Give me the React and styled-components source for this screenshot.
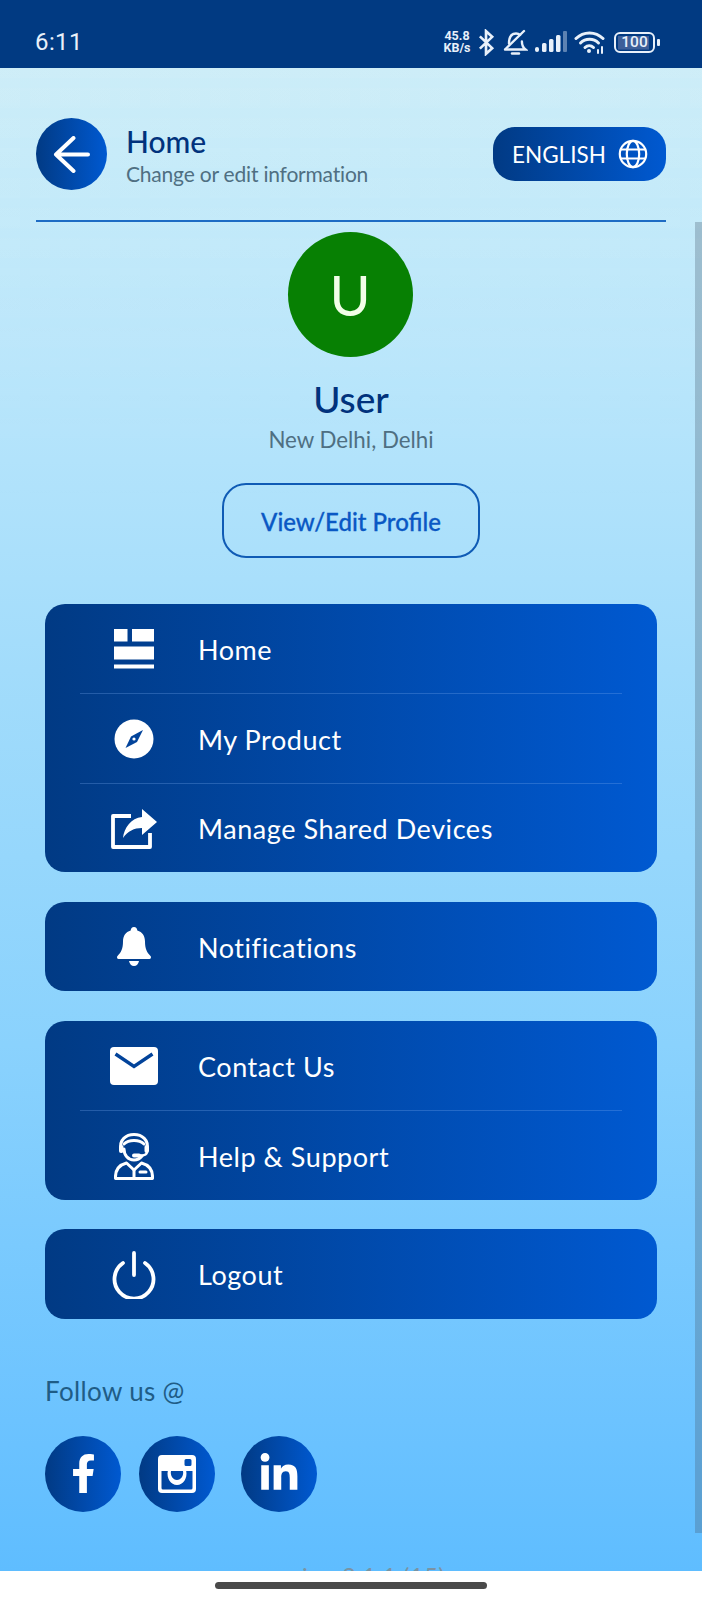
import React from "react";
import styled, { createGlobalStyle } from "styled-components";
import { FaFacebookF, FaLinkedinIn } from "react-icons/fa";

const Global = createGlobalStyle`
  html, body { margin: 0; padding: 0; background: #fff; }
  body { width: 702px; height: 1600px; overflow: hidden; font-family: Lato, "Noto Sans", sans-serif; }
  * { box-sizing: border-box; }
`;

const blue = "linear-gradient(90deg, #013a84 0%, #0059d1 100%)";

const Phone = styled.div`
  width: 702px; height: 1600px; display: flex; flex-direction: column; position: relative; overflow: hidden;
`;
const StatusBar = styled.div`
  height: 68px; flex: none; background: #013a82; display: flex; align-items: center; justify-content: space-between;
  padding: 16px 43px 0 35px; color: #e8f0fa;
`;
const Clock = styled.span`
  font: 400 24px Roboto, sans-serif; letter-spacing: .4px;
`;
const StatusIcons = styled.div`
  display: flex; align-items: center; height: 28px;
`;
const Speed = styled.span`
  font: 700 12.5px/12px Roboto, sans-serif; text-align: center; width: 28px; margin-right: 7px;
`;
const Screen = styled.main`
  flex: none; height: 1503px; position: relative; overflow: hidden;
  background: linear-gradient(180deg, #cbedf8 0%, #b9e6fb 20%, #a2dcfb 40%, #8ad2fd 65%, #6cc3ff 90%, #5fbdff 100%);
  &::before {
    content: ""; position: absolute; left: 0; right: 0; top: 0; height: 460px;
    background:
      repeating-linear-gradient(90deg, rgba(255,255,255,.04) 0 20px, transparent 20px 30px),
      repeating-linear-gradient(0deg, rgba(255,255,255,.04) 0 20px, transparent 20px 30px);
    -webkit-mask-image: linear-gradient(180deg, #000, transparent);
    mask-image: linear-gradient(180deg, #000, transparent);
  }
`;
const Content = styled.div`
  position: relative; display: flex; flex-direction: column; padding-top: 50px;
`;
const Header = styled.header`
  height: 72px; margin: 0 36px; display: flex; align-items: center;
`;
const BackButton = styled.div`
  width: 71px; height: 72px; border-radius: 50%; background: ${blue}; display: flex; align-items: center; justify-content: center; flex: none;
`;
const Titles = styled.div`
  margin-left: 19px; flex: 1; display: flex; flex-direction: column; padding-top: 7px;
`;
const Title = styled.div`
  font-size: 30px; line-height: 36px; color: #01327c; font-weight: 500; letter-spacing: 0; margin-top: -3px;
`;
const Subtitle = styled.div`
  font-size: 21px; line-height: 30px; color: #4f6f82; letter-spacing: -.2px;
`;
const LangPill = styled.div`
  width: 173px; height: 54px; border-radius: 22px; background: ${blue}; color: #fff; display: flex; align-items: center;
  padding-left: 19px; gap: 12px; font-size: 22.5px;
`;
const Rule = styled.hr`
  margin: 30px 36px 0; height: 2px; border: 0; background: #1e6cc4;
`;
const Avatar = styled.div`
  width: 125px; height: 125px; border-radius: 50%; background: #078003; color: #f2ffe8; margin: 10px auto 0;
  display: flex; align-items: center; justify-content: center; font: 400 56px Lato, sans-serif; transform: translateX(-1px);
`;
const UserName = styled.div`
  text-align: center; font-size: 37px; line-height: 42px; color: #01327c; font-weight: 500; margin-top: 21px;
`;
const Location = styled.div`
  text-align: center; font-size: 22.3px; line-height: 28px; color: #4f6f82; margin-top: 6px;
`;
const ProfileButton = styled.div`
  width: 258px; height: 75px; margin: 29px auto 0; border: 2px solid #0f5bb5; border-radius: 24px; color: #0a58c4;
  display: flex; align-items: center; justify-content: center; font-size: 24px; font-weight: 500; padding-top: 2px;
  -webkit-text-stroke: .3px #0a58c4;
`;
const Menu = styled.nav`
  margin: 45.5px 45px 0; display: flex; flex-direction: column; gap: 29.5px;
`;
const Card = styled.section`
  border-radius: 20px; background: ${blue}; padding: 0 35px; display: flex; flex-direction: column;
`;
const Row = styled.div`
  height: 89.5px; padding-top: 2px; display: flex; align-items: center; color: #fff; font-size: 27px; letter-spacing: .55px;
  & + & { border-top: 1px solid rgba(120,170,240,.3); }
`;
const IconSlot = styled.span`
  width: 118px; flex: none; display: flex; justify-content: center;
  & > svg { display: block; transform: translateX(-5px); }
`;
const Follow = styled.div`
  margin: 56px 0 0 45px; font-size: 26px; line-height: 32px; color: #1f5c86; letter-spacing: .35px;
`;
const Socials = styled.div`
  display: flex; margin: 29px 0 0 45px;
`;
const Social = styled.div`
  width: 76px; height: 76px; border-radius: 50%; background: ${blue}; color: #fff; display: flex; align-items: center; justify-content: center;
  margin-right: ${p => p.$gap}px;
`;
const Version = styled.div`
  position: absolute; left: 0; right: 0; top: 1494px; text-align: center; font-size: 24px; line-height: 28px; color: #7a93a3; letter-spacing: .3px;
`;
const Scrollbar = styled.div`
  position: absolute; right: 0; top: 154px; width: 7px; height: 1311px; background: rgba(70,90,110,.3);
`;
const NavBar = styled.div`
  flex: 1; background: #fff; display: flex; justify-content: center; padding-top: 11px;
`;
const HomeIndicator = styled.div`
  width: 272px; height: 7px; border-radius: 4px; background: #4a4a4a;
`;

const Bluetooth = () => (
  <svg width="17" height="27" viewBox="0 0 18 28" fill="none" stroke="currentColor" strokeWidth="2.8" style={{ marginRight: 8 }}>
    <path d="M2 7.500 15 20 8.500 26V2L15 8 2 20.500" strokeLinejoin="miter" />
  </svg>
);
const BellOff = () => (
  <svg width="25" height="27" viewBox="0 0 25 26" fill="none" stroke="currentColor" strokeWidth="2.4" strokeLinecap="round" style={{ marginRight: 7 }}>
    <path d="M2 20h20.500c-2.500-2-3.600-4-3.600-8 M6 14c0-6 2-10 7-10 1.500 0 3 .4 4 1.400" />
    <path d="M3 19 21 1.500" />
    <path d="M9 24h7" />
  </svg>
);
const Signal = () => (
  <svg width="32" height="22" viewBox="0 0 32 22" fill="currentColor" style={{ marginRight: 7 }}>
    <rect x="0" y="16" width="4" height="5" rx="2" />
    <rect x="7" y="12" width="4.500" height="9" rx="1.500" />
    <rect x="14" y="8" width="4.500" height="13" rx="1.500" />
    <rect x="21" y="4" width="4.500" height="17" rx="1.500" />
    <rect x="28" y="0" width="4" height="21" rx="1" opacity=".4" />
  </svg>
);
const Wifi = () => (
  <svg width="32" height="24" viewBox="0 0 32 24" fill="none" stroke="currentColor" strokeWidth="3" strokeLinecap="round" style={{ marginRight: 8 }}>
    <path d="M2 8.500C9.500 1 21.500 1 29 8.500" />
    <path d="M6.500 13c5-5 13-5 18 0" />
    <path d="M11 17.500c2.500-2.400 6-2.400 8.500 0" />
    <circle cx="15" cy="21" r="2" fill="currentColor" stroke="none" />
    <path d="M24 23v-3M28 23v-6" strokeWidth="2" />
  </svg>
);
const Battery = styled.span`
  position: relative; width: 41px; height: 21px; border: 2px solid #e8f0fa; border-radius: 6px; display: flex; align-items: center; justify-content: center;
  font: 500 15.500px Roboto, sans-serif; background: linear-gradient(#3d5f99,#3d5f99) 2px 2px / 84% 80% no-repeat; margin-right: 4px;
  &::after { content: ""; position: absolute; right: -7px; top: 5px; width: 3px; height: 7px; background: #e8f0fa; border-radius: 1px; }
`;

const ArrowBack = () => (
  <svg width="37" height="37" viewBox="0 0 37 37" fill="none" stroke="#fff" strokeWidth="4" strokeLinecap="round" strokeLinejoin="round">
    <path d="M35 18.500H3M20.500 2 3 18.500 20.500 35" />
  </svg>
);
const Globe = () => (
  <svg width="30" height="30" viewBox="0 0 30 30" fill="none" stroke="#fff" strokeWidth="2.200">
    <circle cx="15" cy="15" r="13.200" />
    <ellipse cx="15" cy="15" rx="6.200" ry="13.200" />
    <path d="M2.500 10.500h25M2.500 19.500h25" />
  </svg>
);
const HomeIcon = () => (
  <svg width="40" height="40" viewBox="0 0 40 40" fill="#fff">
    <rect x="0" y="0" width="13.500" height="12.500" />
    <rect x="18" y="0" width="22" height="12.500" />
    <rect x="0" y="17.500" width="40" height="13" />
    <rect x="0" y="35.500" width="40" height="4" />
  </svg>
);
const Compass = () => (
  <svg width="40" height="40" viewBox="0 0 40 40">
    <circle cx="20" cy="20" r="19.500" fill="#fff" />
    <path d="M29 11 23 23 11.500 29 17 17.500Z" fill="#02439a" />
    <circle cx="20" cy="20" r="1.600" fill="#fff" />
  </svg>
);
const ShareIcon = () => (
  <svg width="46" height="40" viewBox="0 0 46 40" fill="none">
    <path d="M20 7H2v31h37V24" stroke="#fff" strokeWidth="3.800" strokeLinejoin="round" />
    <path d="M31 0 46 13 31 26v-7c-8 0-14 3-19 10 1-10 8-20 19-21Z" fill="#fff" />
  </svg>
);
const Bell = () => (
  <svg width="34" height="40" viewBox="0 0 34 40" fill="#fff">
    <path d="M17 0c2 0 3.300 1.500 3.300 3.600 5.200 1.500 7.700 5.600 7.700 11 0 7 1.800 11 5.500 14.400.9.900.5 3-1 3H1.500C0 32-.4 30 .5 29 4.200 25.600 6 21.600 6 14.600c0-5.400 2.500-9.500 7.700-11C13.700 1.500 15 0 17 0Z" />
    <path d="M12 34h10c-.6 3-2.500 5-5 5s-4.400-2-5-5Z" />
  </svg>
);
const Mail = () => (
  <svg width="48" height="38" viewBox="0 0 48 38">
    <rect width="48" height="38" rx="4" fill="#fff" />
    <path d="M5.500 7 24 19.500 42.500 7" fill="none" stroke="#02439a" strokeWidth="3.400" />
  </svg>
);
const Agent = () => (
  <svg width="40" height="47" viewBox="0 0 40 47" fill="none" stroke="#fff" strokeWidth="3" strokeLinejoin="round" strokeLinecap="round">
    <path d="M7 16c-2-9 5-14.500 13-14.500S35 7 33 16" />
    <path d="M10 11c3-3 7-3.500 10-3.500s7 .5 10 3.500" />
    <path d="M10 16c0 6 4 11 10 11 3 0 6-1.500 8-4" />
    <rect x="5" y="12" width="4.500" height="8" rx="2" fill="#fff" stroke="none" />
    <rect x="30.500" y="12" width="4.500" height="8" rx="2" fill="#fff" stroke="none" />
    <path d="M33 19c0 2.500-3 3.500-7 3.500" strokeWidth="2.400" />
    <rect x="18" y="20.500" width="9" height="4" rx="2" fill="#fff" stroke="none" />
    <path d="M1.500 45.500c-.5-9 3.500-13.500 11-15.500L20 37l7.500-7c7.500 2 11.500 6.500 11 15.500Z" />
    <path d="M20 37v8.500M26 39h6" />
  </svg>
);
const Power = () => (
  <svg width="44" height="48" viewBox="0 0 44 48" fill="none" stroke="#fff" strokeWidth="3.800" strokeLinecap="round">
    <path d="M22 2v22" />
    <path d="M11 12a19.500 19.500 0 1 0 22 0" />
  </svg>
);
const Instagram = () => (
  <svg width="38" height="38" viewBox="0 0 38 38">
    <path fillRule="evenodd" fill="#fff" d="M4 0h30a4 4 0 0 1 4 4v30a4 4 0 0 1-4 4H4a4 4 0 0 1-4-4V4a4 4 0 0 1 4-4Z M3.500 16v17a1.500 1.500 0 0 0 1.500 1.500h28a1.500 1.500 0 0 0 1.500-1.500V16h-6.300c1.500 7-3 14-9.200 14S8.300 23 9.800 16Z M13 16c-1 4.500 2 9 6 9s7-4.500 6-9Z M28 4a1.500 1.500 0 0 0-1.500 1.500v4A1.500 1.500 0 0 0 28 11h4a1.500 1.500 0 0 0 1.500-1.500v-4A1.500 1.500 0 0 0 32 4Z" />
  </svg>
);

const groups = [
  [["Home", <HomeIcon />], ["My Product", <Compass />], ["Manage Shared Devices", <ShareIcon />]],
  [["Notifications", <Bell />]],
  [["Contact Us", <Mail />], ["Help & Support", <Agent />]],
  [["Logout", <Power />]],
];

export default function App() {
  return (
    <Phone>
      <Global />
      <StatusBar>
        <Clock>6:11</Clock>
        <StatusIcons>
          <Speed>45.8<br />KB/s</Speed>
          <Bluetooth />
          <BellOff />
          <Signal />
          <Wifi />
          <Battery>100</Battery>
        </StatusIcons>
      </StatusBar>
      <Screen>
        <Content>
          <Header>
            <BackButton><ArrowBack /></BackButton>
            <Titles>
              <Title>Home</Title>
              <Subtitle>Change or edit information</Subtitle>
            </Titles>
            <LangPill>ENGLISH <Globe /></LangPill>
          </Header>
          <Rule />
          <Avatar>U</Avatar>
          <UserName>User</UserName>
          <Location>New Delhi, Delhi</Location>
          <ProfileButton>View/Edit Profile</ProfileButton>
          <Menu>
            {groups.map((rows, i) => (
              <Card key={i}>
                {rows.map(([label, icon]) => (
                  <Row key={label}><IconSlot>{icon}</IconSlot>{label}</Row>
                ))}
              </Card>
            ))}
          </Menu>
          <Follow>Follow us @</Follow>
          <Socials>
            <Social $gap={18}><FaFacebookF size={39} /></Social>
            <Social $gap={26}><Instagram /></Social>
            <Social $gap={0}><FaLinkedinIn size={42} /></Social>
          </Socials>
        </Content>
        <Version>version 2.1.1 (15)</Version>
        <Scrollbar />
      </Screen>
      <NavBar><HomeIndicator /></NavBar>
    </Phone>
  );
}
